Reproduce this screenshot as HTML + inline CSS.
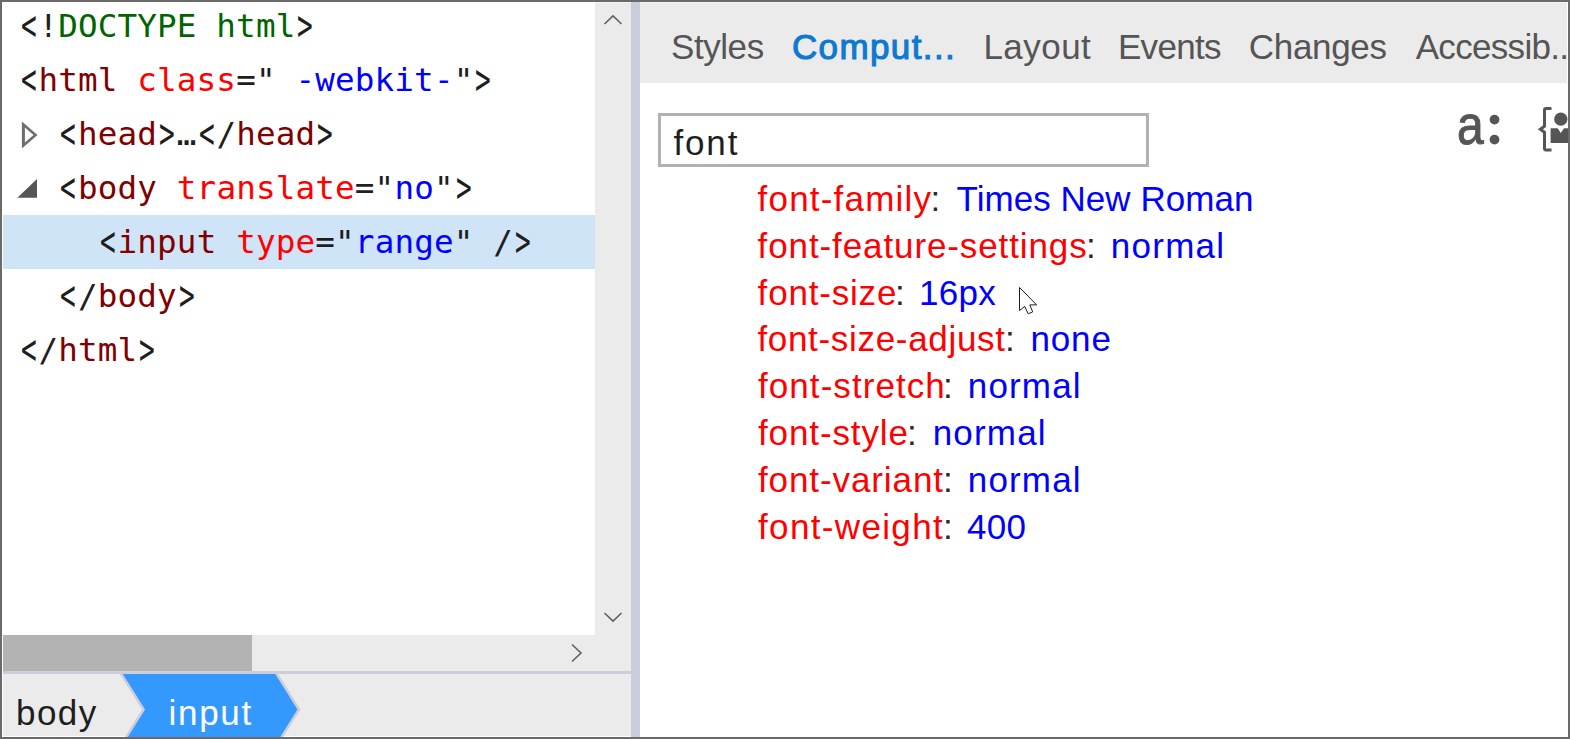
<!DOCTYPE html>
<html lang="en">
<head>
<meta charset="utf-8">
<title>DevTools</title>
<style>
html,body{margin:0;padding:0;}
body{width:1570px;height:739px;overflow:hidden;background:#fff;position:relative;font-family:"Liberation Sans",sans-serif;}
#inner{position:absolute;left:2px;top:2px;width:1564px;height:733px;border:1px solid #fff;border-top-color:rgba(255,255,255,.45);z-index:40;pointer-events:none;}
#frame{position:absolute;left:0;top:0;width:1566px;height:735px;border:2px solid #6a6a6a;z-index:50;pointer-events:none;}
.abs{position:absolute;}
/* ---------- left: DOM tree ---------- */
#tree{position:absolute;left:2px;top:2px;width:593px;height:633px;background:#fff;overflow:hidden;}
#selrow{position:absolute;left:0;top:213px;width:593px;height:54px;background:#cfe4f7;}
.ml{position:absolute;height:54px;line-height:54px;white-space:pre;
  font-family:"DejaVu Sans Mono","Liberation Mono",monospace;font-size:32.6px;letter-spacing:0.16px;color:#222;}
.ml .b{display:inline-block;transform:scale(.8,1.3);}
.ml .t{color:#800000;}
.ml .a{color:#ff0000;}
.ml .v{color:#0000ff;}
.ml .d{color:#006400;}
.ml .p{color:#1e1e1e;}
/* scrollbars */
#vs{position:absolute;left:595px;top:2px;width:36px;height:669px;background:#ebebeb;}
#hs{position:absolute;left:2px;top:635px;width:593px;height:36px;background:#ebebeb;}
#hthumb{position:absolute;left:2px;top:635px;width:250px;height:36px;background:#b3b3b3;}
#split{position:absolute;left:631px;top:2px;width:9px;height:735px;background:#cbcddc;z-index:45;}
#hline{position:absolute;left:2px;top:671px;width:629px;height:3px;background:#cbcddc;}
#crumbsbg{position:absolute;left:2px;top:674px;width:629px;height:63px;background:#ebebeb;}
#crumbs{position:absolute;left:2px;top:674px;width:629px;height:63px;overflow:hidden;z-index:42;}
/* ---------- right ---------- */
#tabs{position:absolute;left:640px;top:2px;width:928px;height:81px;background:#ebebeb;overflow:hidden;}
#filter{position:absolute;left:658px;top:113px;width:485px;height:48px;border:3px solid #b2b2b2;background:#fff;}
.txt{position:absolute;white-space:nowrap;font-size:35px;line-height:40px;}
</style>
</head>
<body>
<div id="tree">
<div id="selrow"></div>
<div id="t_m0" class="ml" style="left:16.60px;top:-2.80px"><span class="p"><span class="b">&lt;</span>!</span><span class="d">DOCTYPE html</span><span class="p"><span class="b">&gt;</span></span></div>
<div id="t_m1" class="ml" style="left:16.60px;top:51.20px"><span class="p"><span class="b">&lt;</span></span><span class="t">html</span> <span class="a">class</span><span class="p">="</span><span class="v"> -webkit-</span><span class="p">"<span class="b">&gt;</span></span></div>
<div id="t_m2" class="ml" style="left:56.18px;top:105.20px"><span class="p"><span class="b">&lt;</span></span><span class="t">head</span><span class="p"><span class="b">&gt;</span>…<span class="b">&lt;</span>/</span><span class="t">head</span><span class="p"><span class="b">&gt;</span></span></div>
<div id="t_m3" class="ml" style="left:56.18px;top:159.20px"><span class="p"><span class="b">&lt;</span></span><span class="t">body</span> <span class="a">translate</span><span class="p">="</span><span class="v">no</span><span class="p">"<span class="b">&gt;</span></span></div>
<div id="t_m4" class="ml" style="left:95.76px;top:213.20px"><span class="p"><span class="b">&lt;</span></span><span class="t">input</span> <span class="a">type</span><span class="p">="</span><span class="v">range</span><span class="p">" /<span class="b">&gt;</span></span></div>
<div id="t_m5" class="ml" style="left:56.18px;top:267.20px"><span class="p"><span class="b">&lt;</span>/</span><span class="t">body</span><span class="p"><span class="b">&gt;</span></span></div>
<div id="t_m6" class="ml" style="left:16.60px;top:321.20px"><span class="p"><span class="b">&lt;</span>/</span><span class="t">html</span><span class="p"><span class="b">&gt;</span></span></div>
  <svg class="abs" style="left:0;top:100px" width="60" height="110" viewBox="0 100 60 110">
    <path d="M19.9 119.5 L35.5 133.05 L19.9 146.6 Z M22.9 125.5 L22.9 140.6 L31.5 133.05 Z" fill="#6e6e6e" fill-rule="evenodd"/>
    <path d="M35 177 L35 195.7 L15.4 195.7 Z" fill="#555"/>
  </svg>
</div>
<div id="vs">
  <svg class="abs" style="left:8px;top:10px" width="20" height="14" viewBox="0 0 20 14"><path d="M1.5 12 L10 3.9 L18.5 12" fill="none" stroke="#606060" stroke-width="1.6"/></svg>
  <svg class="abs" style="left:8px;top:608.5px" width="20" height="14" viewBox="0 0 20 14"><path d="M1.5 2 L10 10.1 L18.5 2" fill="none" stroke="#606060" stroke-width="1.6"/></svg>
</div>
<div id="hs"></div>
<div id="hthumb"></div>
<svg class="abs" style="left:570px;top:643px" width="14" height="20" viewBox="0 0 14 20"><path d="M2 1.5 L11 10 L2 18.5" fill="none" stroke="#606060" stroke-width="1.6"/></svg>
<div id="hline"></div>
<div id="crumbsbg"></div>
<div id="crumbs">
  <svg class="abs" style="left:110px;top:-2px" width="200" height="76" viewBox="0 0 200 76"><path d="M8.6 0.8 L164 0.8 L187 37.5 L164 74.2 L8.6 74.2 L31.6 37.5 Z" fill="#3399ff" stroke="#cbcddc" stroke-width="2.5"/></svg>
<span id="t_cbody" class="txt" style="left:14.00px;top:18.67px;font-size:35px;letter-spacing:1.440px;color:#1e1e1e;">body</span>
<span id="t_cinput" class="txt" style="left:166.60px;top:18.67px;font-size:35px;letter-spacing:1.665px;color:#ffffff;">input</span>
</div>
<div id="split"></div>

<div id="tabs">
<span id="t_tab0" class="txt" style="left:31.00px;top:24.67px;font-size:35px;letter-spacing:-0.432px;color:#555555;">Styles</span>
<span id="t_tab1" class="txt" style="left:151.90px;top:24.67px;font-size:35px;letter-spacing:1.395px;color:#0e79d1;-webkit-text-stroke:1.1px #0e79d1;">Comput...</span>
<span id="t_tab2" class="txt" style="left:343.40px;top:24.67px;font-size:35px;letter-spacing:0.468px;color:#555555;">Layout</span>
<span id="t_tab3" class="txt" style="left:478.00px;top:24.67px;font-size:35px;letter-spacing:-0.720px;color:#555555;">Events</span>
<span id="t_tab4" class="txt" style="left:608.80px;top:24.67px;font-size:35px;letter-spacing:-0.330px;color:#555555;">Changes</span>
<span id="t_tab5" class="txt" style="left:775.70px;top:24.67px;font-size:35px;letter-spacing:-0.684px;color:#555555;">Accessib...</span>
</div>
<div id="icons" class="abs" style="left:1440px;top:100px;width:128px;height:60px;overflow:hidden;z-index:42;">
  <span id="t_ia" class="abs" style="left:16.8px;top:-8.6px;font-size:54.6px;line-height:70px;color:#555;-webkit-text-stroke:1px #555;transform-origin:0 0;transform:scaleX(0.88);">a</span>
  <svg class="abs" style="left:0;top:0" width="128" height="60" viewBox="1440 100 128 60">
    <circle cx="1494.5" cy="119.6" r="4.9" fill="#555"/><circle cx="1494.5" cy="139.6" r="4.9" fill="#555"/>
    <path d="M1551.5 108.5 L1546 108.5 Q1544.5 108.5 1544.5 110 L1544.5 126.3 L1540.4 129.3 L1544.5 132.3 L1544.5 148.6 Q1544.5 150.1 1546 150.1 L1551.5 150.1" fill="none" stroke="#555" stroke-width="3"/>
    <circle cx="1560.8" cy="119.2" r="6.6" fill="#555"/>
    <path d="M1550.6 128.2 L1557.6 128.2 L1560.8 133 L1564 128.2 L1572 128.2 L1572 143 L1550.6 143 Z" fill="#555"/>
  </svg>
</div>
<div id="filter"></div>
<span id="t_filt" class="txt" style="left:673.40px;top:122.57px;font-size:35px;letter-spacing:1.860px;color:#1e1e1e;">font</span>
<span id="t_n0" class="txt" style="left:757.60px;top:178.97px;font-size:35px;letter-spacing:1.188px;color:#ff0000;">font-family</span>
<span id="t_c0" class="txt" style="left:930.40px;top:178.97px;font-size:35px;letter-spacing:0.000px;color:#2a2a2a;">:</span>
<span id="t_v0" class="txt" style="left:956.60px;top:178.97px;font-size:35px;letter-spacing:0.039px;color:#0000ff;">Times New Roman</span>
<span id="t_n1" class="txt" style="left:757.60px;top:225.78px;font-size:35px;letter-spacing:0.891px;color:#ff0000;">font-feature-settings</span>
<span id="t_c1" class="txt" style="left:1086.00px;top:225.78px;font-size:35px;letter-spacing:0.000px;color:#2a2a2a;">:</span>
<span id="t_v1" class="txt" style="left:1110.70px;top:225.78px;font-size:35px;letter-spacing:1.296px;color:#0000ff;">normal</span>
<span id="t_n2" class="txt" style="left:757.60px;top:272.59px;font-size:35px;letter-spacing:0.810px;color:#ff0000;">font-size</span>
<span id="t_c2" class="txt" style="left:895.00px;top:272.59px;font-size:35px;letter-spacing:0.000px;color:#2a2a2a;">:</span>
<span id="t_v2" class="txt" style="left:919.00px;top:272.59px;font-size:35px;letter-spacing:0.300px;color:#0000ff;">16px</span>
<span id="t_n3" class="txt" style="left:757.40px;top:319.40px;font-size:35px;letter-spacing:0.684px;color:#ff0000;">font-size-adjust</span>
<span id="t_c3" class="txt" style="left:1004.90px;top:319.40px;font-size:35px;letter-spacing:0.000px;color:#2a2a2a;">:</span>
<span id="t_v3" class="txt" style="left:1030.50px;top:319.40px;font-size:35px;letter-spacing:0.840px;color:#0000ff;">none</span>
<span id="t_n4" class="txt" style="left:758.00px;top:366.21px;font-size:35px;letter-spacing:1.064px;color:#ff0000;">font-stretch</span>
<span id="t_c4" class="txt" style="left:943.00px;top:366.21px;font-size:35px;letter-spacing:0.000px;color:#2a2a2a;">:</span>
<span id="t_v4" class="txt" style="left:967.80px;top:366.21px;font-size:35px;letter-spacing:1.152px;color:#0000ff;">normal</span>
<span id="t_n5" class="txt" style="left:758.00px;top:413.02px;font-size:35px;letter-spacing:0.880px;color:#ff0000;">font-style</span>
<span id="t_c5" class="txt" style="left:906.90px;top:413.02px;font-size:35px;letter-spacing:0.000px;color:#2a2a2a;">:</span>
<span id="t_v5" class="txt" style="left:932.70px;top:413.02px;font-size:35px;letter-spacing:1.188px;color:#0000ff;">normal</span>
<span id="t_n6" class="txt" style="left:758.00px;top:459.83px;font-size:35px;letter-spacing:0.900px;color:#ff0000;">font-variant</span>
<span id="t_c6" class="txt" style="left:943.00px;top:459.83px;font-size:35px;letter-spacing:0.000px;color:#2a2a2a;">:</span>
<span id="t_v6" class="txt" style="left:967.80px;top:459.83px;font-size:35px;letter-spacing:1.152px;color:#0000ff;">normal</span>
<span id="t_n7" class="txt" style="left:758.00px;top:506.64px;font-size:35px;letter-spacing:1.350px;color:#ff0000;">font-weight</span>
<span id="t_c7" class="txt" style="left:943.00px;top:506.64px;font-size:35px;letter-spacing:0.000px;color:#2a2a2a;">:</span>
<span id="t_v7" class="txt" style="left:967.00px;top:506.64px;font-size:35px;letter-spacing:0.270px;color:#0000ff;">400</span>

<svg id="cursor" class="abs" style="left:1010px;top:280px" width="36" height="40" viewBox="1010 280 36 40"><path d="M1019.5 287.4 L1019.5 310.6 L1024.7 306.4 L1028.2 313.8 L1032.7 311.9 L1029.8 304.9 L1036.6 304.9 Z" fill="#fff" stroke="#1b1b2b" stroke-width="1" stroke-linejoin="miter"/></svg>
<div id="inner"></div>
<div id="frame"></div>
</body>
</html>
